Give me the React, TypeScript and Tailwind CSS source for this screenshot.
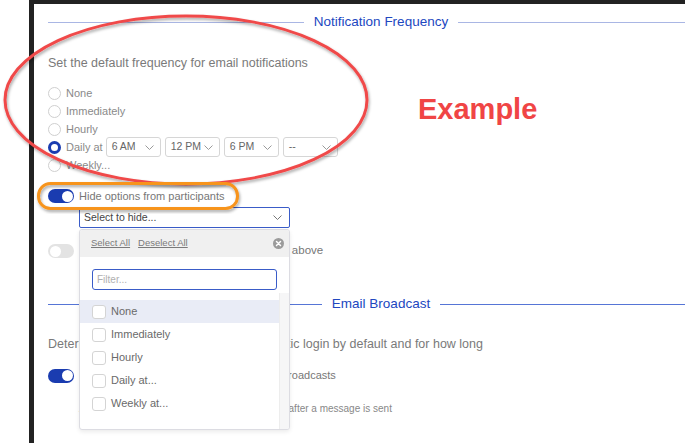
const Chevron = ({ className = "" }: { className?: string }) => (
  <svg width="9" height="5" viewBox="0 0 9 5" className={className}>
    <polyline points="0.5,0.5 4.5,4.5 8.5,0.5" fill="none" stroke="currentColor" strokeWidth="1" />
  </svg>
)

const Radio = ({ checked = false }: { checked?: boolean }) =>
  checked ? (
    <span className="w-[13px] h-[13px] rounded-full border-[3.5px] border-[#1a3cb0] bg-white shrink-0"></span>
  ) : (
    <span className="w-[13px] h-[13px] rounded-full border border-[#cfcfcf] bg-white shrink-0"></span>
  )

const Toggle = ({ on }: { on: boolean }) =>
  on ? (
    <span className="w-[26px] h-[14px] rounded-full bg-[#1a3cb0] flex items-center justify-end px-[1.5px] shrink-0">
      <span className="w-[11px] h-[11px] rounded-full bg-white"></span>
    </span>
  ) : (
    <span className="w-[26px] h-[14px] rounded-full bg-[#e3e3e3] flex items-center px-[1.5px] shrink-0">
      <span className="w-[11px] h-[11px] rounded-full bg-white"></span>
    </span>
  )

const TimeSelect = ({ value }: { value: string }) => (
  <div className="w-[55px] h-[20px] border border-[#d6d6d6] rounded-[3px] flex items-center justify-between pl-[5px] pr-[6px] text-[10.5px] text-[#666] bg-white">
    <span>{value}</span>
    <Chevron className="text-[#9a9a9a]" />
  </div>
)

const SectionTitle = ({ title, line }: { title: string; line: string }) => (
  <div className="w-[666px] h-[18px] flex items-center gap-[10px]">
    <div className={`flex-1 h-px ${line}`}></div>
    <p className="text-[13.5px] text-[#2147bf] leading-[18px]">{title}</p>
    <div className={`flex-1 h-px ${line}`}></div>
  </div>
)

const options = ["None", "Immediately", "Hourly", "Daily at...", "Weekly at..."]

export default function App() {
  return (
    <div className="relative w-[685px] h-[443px] overflow-hidden bg-white font-['Liberation_Sans',Arial,sans-serif] flex">
      <div className="w-[29px] shrink-0"></div>
      <div className="flex-1 border-l-[5px] border-t-[4px] border-[#222] pl-[14px] flex flex-col">
        <div className="mt-[9px]">
          <SectionTitle title="Notification Frequency" line="bg-[#a9b6e4]" />
        </div>
        <p className="mt-[24px] text-[12.5px] leading-[16px] text-[#7a7a7a]">
          Set the default frequency for email notifications
        </p>
        <div className="mt-[13px] flex flex-col text-[11px] text-[#8a8a8a]">
          <div className="h-[18px] flex items-center gap-[5px]">
            <Radio />
            <span>None</span>
          </div>
          <div className="h-[18px] flex items-center gap-[5px]">
            <Radio />
            <span>Immediately</span>
          </div>
          <div className="h-[18px] flex items-center gap-[5px]">
            <Radio />
            <span>Hourly</span>
          </div>
          <div className="h-[18px] flex items-center gap-[5px]">
            <Radio checked />
            <span>Daily at</span>
            <div className="flex gap-[4px] -ml-[2px]">
              <TimeSelect value="6 AM" />
              <TimeSelect value="12 PM" />
              <TimeSelect value="6 PM" />
              <TimeSelect value="--" />
            </div>
          </div>
          <div className="h-[18px] flex items-center gap-[5px]">
            <Radio />
            <span>Weekly...</span>
          </div>
        </div>

        <div className="mt-[14px] h-[16px] flex items-center gap-[5px] text-[11px] text-[#777]">
          <Toggle on />
          <span>Hide options from participants</span>
        </div>

        <div className="relative mt-[3px] ml-[31px] w-[211px]">
          <div className="h-[21px] border border-[#3a5cc8] rounded-[2px] flex items-center justify-between pl-[4px] pr-[7px] text-[10.5px] text-[#444] bg-white">
            <span>Select to hide...</span>
            <Chevron className="text-[#777]" />
          </div>
          <div className="absolute z-10 left-0 top-[22px] w-[211px] h-[201px] bg-white border border-[#dcdce2] rounded-[3px] shadow-[0_2px_4px_rgba(0,0,0,0.08)] flex flex-col overflow-hidden">
            <div className="h-[27px] bg-[#f0f0f0] flex items-center justify-between pl-[11px] pr-[5px] text-[9.5px] text-[#7a7a7a]">
              <div className="flex gap-[8px]">
                <span className="underline">Select All</span>
                <span className="underline">Deselect All</span>
              </div>
              <svg width="11" height="11" viewBox="0 0 12 12">
                <circle cx="6" cy="6" r="6" fill="#9b9b9b" />
                <path d="M3.8 3.8 L8.2 8.2 M8.2 3.8 L3.8 8.2" stroke="#fff" strokeWidth="1.6" strokeLinecap="round" />
              </svg>
            </div>
            <div className="mt-[12px] ml-[12px] w-[185px] h-[21px] border border-[#3a5cc8] rounded-[3px] flex items-center pl-[4px] text-[10px] text-[#b0b0b0]">
              Filter...
            </div>
            <div className="flex flex-1 mt-[3px]">
              <div className="flex-1 pt-[7px] flex flex-col">
                {options.map((o, i) => (
                  <div
                    key={o}
                    className={`h-[23px] flex items-center gap-[5px] pl-[12px] text-[11px] text-[#6a6a6a] ${i === 0 ? "bg-[#e9ecf6]" : ""}`}
                  >
                    <span className="w-[14px] h-[14px] border border-[#d4d4d4] rounded-[3px] bg-white shrink-0"></span>
                    <span>{o}</span>
                  </div>
                ))}
              </div>
              <div className="w-[10px] bg-[#f6f6f7] border-l border-[#ededed]"></div>
            </div>
          </div>
        </div>

        <div className="mt-[16px] h-[14px] flex items-center gap-[5px] text-[11.5px] text-[#777] whitespace-nowrap">
          <Toggle on={false} />
          <span>Let participants override all of the options above</span>
        </div>

        <div className="mt-[37px]">
          <SectionTitle title="Email Broadcast" line="bg-[#5675d6]" />
        </div>
        <p className="mt-[23px] text-[12.5px] leading-[16px] text-[#7a7a7a] whitespace-nowrap">
          Determine whether participants get automatic login by default and for how long
        </p>
        <div className="mt-[16px] h-[15px] flex items-center gap-[5px] text-[11px] text-[#777] whitespace-nowrap">
          <Toggle on />
          <span>Enable the automatic login links for email broadcasts</span>
        </div>
        <p className="mt-[19px] ml-[31px] text-[10px] leading-[14px] text-[#888] whitespace-nowrap">
          Automatic login links will expire seven full days after a message is sent
        </p>
      </div>

      <svg className="absolute left-0 top-0 z-20 pointer-events-none" width="685" height="443">
        <defs>
          <filter id="sh" x="-10%" y="-10%" width="120%" height="130%">
            <feDropShadow dx="1" dy="2" stdDeviation="1.5" floodColor="#000" floodOpacity="0.35" />
          </filter>
        </defs>
        <ellipse cx="186" cy="100" rx="181" ry="84" fill="none" stroke="#f04a4a" strokeWidth="3" filter="url(#sh)" />
        <rect x="38.5" y="183.5" width="199" height="25" rx="12" fill="none" stroke="#f7941d" strokeWidth="3" filter="url(#sh)" />
      </svg>
      <p className="absolute z-20 left-[418px] top-[92px] text-[29px] font-bold text-[#f04545] leading-[34px]">
        Example
      </p>
    </div>
  )
}
